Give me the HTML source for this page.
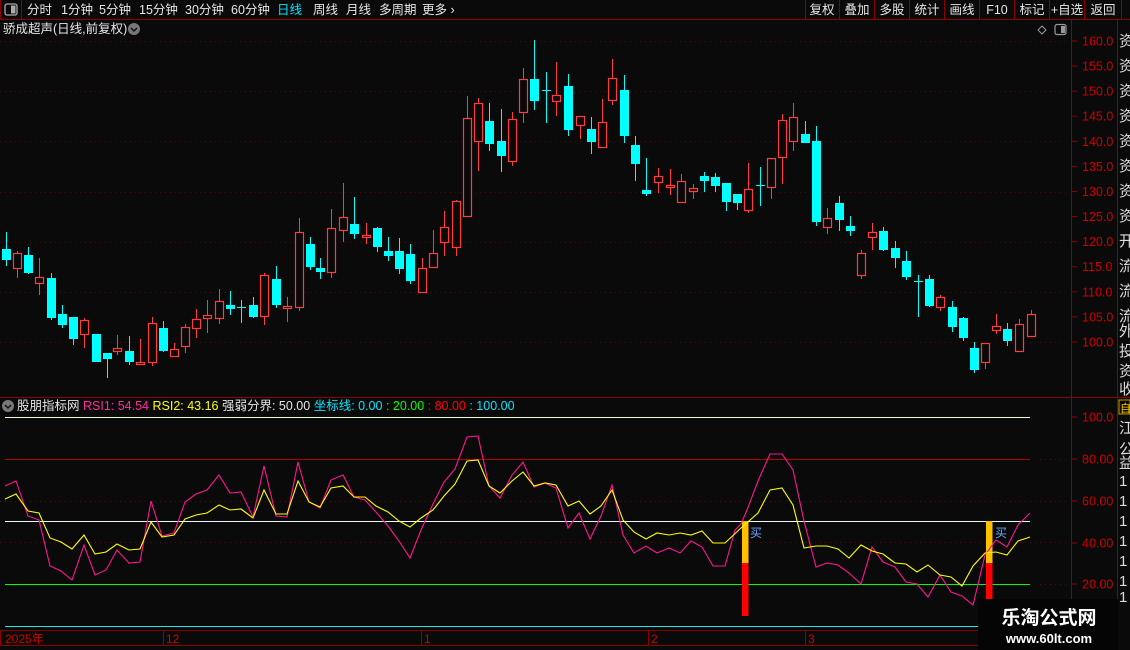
<!DOCTYPE html>
<html><head><meta charset="utf-8">
<style>
body{margin:0;width:1130px;height:650px;background:#0a0a0a;overflow:hidden;font-family:"Liberation Sans","Noto Sans CJK SC",sans-serif;}
svg{position:absolute;left:0;top:0}
text{font-family:"Liberation Sans","Noto Sans CJK SC",sans-serif}
</style></head><body>
<svg id="s" width="1130" height="650" xmlns="http://www.w3.org/2000/svg">
<rect width="1130" height="650" fill="#0a0a0a"/>
<line x1="0" y1="19.5" x2="1130" y2="19.5" stroke="#8b0000"/>
<rect x="0.5" y="-1" width="21" height="20.5" fill="none" stroke="#8b0000"/>
<rect x="5" y="4" width="12" height="11" rx="2" fill="none" stroke="#aaa" stroke-width="1.3"/>
<rect x="11" y="5.5" width="4.5" height="8" fill="#aaa"/>
<g font-size="12.5" fill="#e6e6e6">
<text x="27" y="14">分时</text><text x="61" y="14">1分钟</text><text x="99" y="14">5分钟</text>
<text x="139" y="14">15分钟</text><text x="185" y="14">30分钟</text><text x="231" y="14">60分钟</text>
<text x="277" y="14" fill="#00e5ff">日线</text><text x="313" y="14">周线</text><text x="346" y="14">月线</text>
<text x="379" y="14">多周期</text><text x="422" y="14">更多 ›</text>
</g>
<g stroke="#8b0000">
<line x1="805.5" y1="0" x2="805.5" y2="19"/><line x1="839.5" y1="0" x2="839.5" y2="19"/>
<line x1="874.5" y1="0" x2="874.5" y2="19"/><line x1="909.5" y1="0" x2="909.5" y2="19"/>
<line x1="944.5" y1="0" x2="944.5" y2="19"/><line x1="979.5" y1="0" x2="979.5" y2="19"/>
<line x1="1014.5" y1="0" x2="1014.5" y2="19"/><line x1="1049.5" y1="0" x2="1049.5" y2="19"/>
<line x1="1084.5" y1="0" x2="1084.5" y2="19"/><line x1="1121.5" y1="0" x2="1121.5" y2="19"/>
</g>
<g font-size="12.5" fill="#e6e6e6" text-anchor="middle">
<text x="822" y="14">复权</text><text x="857" y="14">叠加</text><text x="892" y="14">多股</text>
<text x="927" y="14">统计</text><text x="962" y="14">画线</text><text x="997" y="14">F10</text>
<text x="1032" y="14">标记</text><text x="1067" y="14">+自选</text><text x="1103" y="14">返回</text>
</g>
<text x="3" y="33" font-size="12.5" fill="#e6e6e6">骄成超声(日线,前复权)</text>
<circle cx="134" cy="29" r="6" fill="#777"/><path d="M131 28l3 3 3-3" stroke="#111" stroke-width="1.5" fill="none"/>
<path d="M1042 26l4 4-4 4-4-4z" fill="none" stroke="#999"/>
<rect x="1055" y="24.5" width="11" height="10" rx="2" fill="none" stroke="#999" stroke-width="1.2"/><rect x="1061" y="26" width="4" height="7" fill="#999"/>
<line x1="1071.5" y1="20" x2="1071.5" y2="646" stroke="#8b0000"/>
<line x1="1117.5" y1="20" x2="1117.5" y2="650" stroke="#8b0000"/>
<line x1="0" y1="397.5" x2="1130" y2="397.5" stroke="#8b0000"/>
<line x1="0" y1="630.5" x2="1071" y2="630.5" stroke="#8b0000"/>
<line x1="0" y1="645.5" x2="1071" y2="645.5" stroke="#8b0000"/>
<g id="grid"></g>
<g id="cand"></g>
<g font-size="12.5" fill="#cc0000" id="ax"></g>
<g font-size="15" fill="#ddd">
<text x="1119" y="46">资</text><text x="1119" y="71">资</text><text x="1119" y="96">资</text><text x="1119" y="121">资</text>
<text x="1119" y="146">资</text><text x="1119" y="171">资</text><text x="1119" y="196">资</text><text x="1119" y="221">资</text>
<text x="1119" y="246">开</text><text x="1119" y="271">流</text><text x="1119" y="296">流</text><text x="1119" y="321">流</text>
<text x="1119" y="336">外</text><text x="1119" y="356">投</text><text x="1119" y="376">资</text><text x="1119" y="394">收</text>
<text x="1119" y="433">江</text><text x="1119" y="454">公</text><text x="1119" y="468">益</text>
<text x="1119" y="486">1</text><text x="1119" y="506">1</text><text x="1119" y="526">1</text><text x="1119" y="546">1</text><text x="1119" y="566">1</text><text x="1119" y="586">1</text><text x="1119" y="602">1</text>
</g>
<rect x="1119" y="400" width="11" height="14" fill="none" stroke="#cc9900"/><text x="1120" y="412" font-size="11" fill="#ffcc00">自</text>
<circle cx="8" cy="406" r="6" fill="#777"/><path d="M5 405l3 3 3-3" stroke="#111" stroke-width="1.5" fill="none"/>
<text x="17" y="410" font-size="12.5"><tspan fill="#e6e6e6">股朋指标网 </tspan><tspan fill="#ff2a9a">RSI1: 54.54 </tspan><tspan fill="#ffff00">RSI2: 43.16 </tspan><tspan fill="#e6e6e6">强弱分界: 50.00 </tspan><tspan fill="#00e5ff">坐标线: 0.00 </tspan><tspan fill="#00ff00">: 20.00 </tspan><tspan fill="#ff0000">: 80.00 </tspan><tspan fill="#00e5ff">: 100.00</tspan></text>
<g stroke-dasharray="1 4" stroke="#6a0000"><line x1="0" y1="501.5" x2="1070" y2="501.5"/><line x1="0" y1="542.5" x2="1070" y2="542.5"/><line x1="1040" y1="459.5" x2="1070" y2="459.5"/><line x1="1040" y1="584.5" x2="1070" y2="584.5"/></g>
<line x1="5" y1="417.5" x2="1030" y2="417.5" stroke="#eaffe0"/>
<line x1="5" y1="459.5" x2="1030" y2="459.5" stroke="#b00000"/>
<line x1="5" y1="521.5" x2="1030" y2="521.5" stroke="#f0f8ff"/>
<line x1="5" y1="584.5" x2="1030" y2="584.5" stroke="#00ff00"/>
<line x1="5" y1="626.5" x2="1030" y2="626.5" stroke="#22e5e5"/>
<rect x="742" y="521" width="6.5" height="42" fill="#ffc000"/><rect x="742" y="563" width="6.5" height="53" fill="#ff0000"/>
<rect x="986" y="521" width="6.5" height="42" fill="#ffc000"/><rect x="986" y="563" width="6.5" height="50" fill="#ff0000"/>
<polyline fill="none" stroke="#ff1493" stroke-width="1.1" points="5,486 16,481 28,516 39,520 50,566 61,571 72,580 84,545 95,575 106,570 117,550 129,563 140,562 151,501 162,536 174,533 185,502 196,494 207,490 219,475 230,493 241,492 253,517 264,466 276,516 287,517 298,462 309,502 320,508 331,480 343,475 354,497 365,500 376,512 388,526 399,541 410,558 421,530 433,504 444,482 455,469 467,437 478,436 489,486 500,498 512,475 523,462 534,487 545,483 556,488 568,528 579,513 590,539 601,516 612,485 623,535 634,553 646,546 657,553 669,548 680,553 691,541 702,547 713,566 725,566 735,530 741,524 747,510 758,481 770,454 782,454 793,470 804,521 816,567 827,563 838,565 849,573 861,584 872,547 883,562 895,567 906,582 917,584 928,597 940,575 951,592 962,596 973,605 985,555 996,540 1007,547 1018,525 1030,513"/>
<polyline fill="none" stroke="#ffff00" stroke-width="1.1" points="5,499 16,494 28,511 39,513 50,538 61,542 72,549 84,535 95,554 106,552 117,544 129,550 140,549 151,522 162,537 174,535 185,519 196,515 207,513 219,505 230,510 241,509 253,518 264,490 276,514 287,514 298,481 309,502 320,507 331,488 343,486 354,497 365,497 376,506 388,512 399,521 410,527 421,518 433,510 444,496 455,484 467,461 478,460 489,486 500,493 512,481 523,472 534,486 545,483 556,485 568,506 579,501 590,514 601,506 612,490 623,520 634,532 646,539 657,533 669,535 680,533 691,535 702,531 713,543 725,543 741,528 758,513 770,490 782,488 793,505 804,548 816,546 827,546 838,549 849,558 861,545 872,551 883,554 895,563 906,564 917,572 928,565 940,575 951,577 962,586 973,566 985,553 996,552 1007,555 1018,541 1030,537"/>
<text x="750" y="537" font-size="12" fill="#6aa8ff">买</text>
<text x="995" y="537" font-size="12" fill="#6aa8ff">买</text>
<g stroke="#8b0000"><line x1="0.5" y1="630" x2="0.5" y2="646"/><line x1="163.5" y1="630" x2="163.5" y2="646"/><line x1="421.5" y1="630" x2="421.5" y2="646"/><line x1="648.5" y1="630" x2="648.5" y2="646"/><line x1="805.5" y1="630" x2="805.5" y2="646"/></g>
<g font-size="12" fill="#cc0000"><text x="5" y="643">2025年</text><text x="166" y="643">12</text><text x="424" y="643">1</text><text x="651" y="643">2</text><text x="808" y="643">3</text></g>
<rect x="978" y="599" width="140" height="51" fill="#050505"/>
<text x="1049" y="624" font-size="19" font-weight="bold" fill="#fff" text-anchor="middle">乐淘公式网</text>
<text x="1049" y="643" font-size="13" font-weight="bold" fill="#fff" text-anchor="middle" font-family="Liberation Serif,serif">www.60lt.com</text>
</svg>
<script>
var NS="http://www.w3.org/2000/svg";
function el(p,t,a){var e=document.createElementNS(NS,t);for(var k in a)e.setAttribute(k,a[k]);document.getElementById(p).appendChild(e);return e;}
for(var i=0;i<7;i++){var y=Math.round(41+i*50.17)+0.5;el("grid","line",{x1:0,y1:y,x2:1070,y2:y,stroke:"#5a0000","stroke-dasharray":"1 4"});}
for(var i=0;i<13;i++){var y=41+i*25.08;el("ax","line",{x1:1071,y1:y,x2:1077,y2:y,stroke:"#8b0000"});var t=el("ax","text",{x:1082,y:y+4.5});t.textContent=(160-i*5).toFixed(1);}
var il=[[417,"100.0"],[459,"80.00"],[501,"60.00"],[543,"40.00"],[584,"20.00"]];
il.forEach(function(a){el("ax","line",{x1:1071,y1:a[0],x2:1077,y2:a[0],stroke:"#8b0000"});var t=el("ax","text",{x:1082,y:a[0]+4.5});t.textContent=a[1];});
var C=[[5.5,249,260,232,266,0],[16.5,253,268,251,278,1],[27.5,255,273,247,274,0],[39,277,283,258,295,1],[50.5,278,318,273,320,0],[61.5,314,325,305,328,0],[72.5,317,339,317,345,0],[84,320,334,318,348,1],[95.5,334,362,334,362,0],[106.5,353,359,353,378,0],[117,348,351,335,355,1],[129,351,362,336,365,0],[140,362,364,339,364,1],[151.5,323,362,317,366,1],[162.5,328,351,321,352,0],[174,349,356,343,356,1],[185,327,346,324,353,1],[196,319,328,309,338,1],[207,315,318,300,333,1],[219,301,318,289,324,1],[230,305,309,291,315,0],[241,307,308,300,323,0],[253,305,317,297,318,0],[264,275,316,273,325,1],[276,279,305,266,308,0],[287,306,308,297,322,1],[298.5,232,307,218,311,1],[309.5,244,267,237,270,0],[320,268,272,258,279,0],[331,228,272,209,278,1],[343,217,230,183,242,1],[354,224,234,197,239,0],[365.5,235,237,223,244,1],[376.5,228,247,227,252,0],[388,251,256,237,261,0],[399,251,269,238,274,0],[410,254,281,244,284,0],[421.5,268,292,258,292,1],[433,253,267,230,267,1],[444,227,242,211,256,1],[455.5,201,247,200,256,1],[467,118,216,96,216,1],[478,103,141,98,171,1],[489,121,144,103,151,0],[500.5,141,156,109,172,0],[512,119,161,112,166,1],[523,79,112,68,123,1],[534,79,101,40,110,0],[545.5,90,91,72,123,0],[556,95,101,62,116,1],[568,86,130,74,136,0],[579.5,116,125,116,139,1],[590.5,129,142,117,154,0],[601.5,122,147,99,147,1],[612,78,100,59,105,1],[623.5,90,136,75,143,0],[634.5,145,164,136,181,0],[646,190,194,158,196,0],[657.5,176,182,168,193,1],[669.5,185,187,169,195,1],[681,181,202,174,203,1],[692.5,188,191,184,199,1],[703.5,176,181,172,192,0],[714.5,177,186,173,192,0],[726,183,202,183,211,0],[737,194,203,194,210,0],[748,189,210,163,213,1],[759.5,185,186,167,206,0],[771,158,187,158,199,1],[782,120,157,114,184,1],[793,117,141,103,151,1],[804.5,134,143,121,143,0],[816,141,222,126,226,0],[827,218,227,208,234,1],[838.5,203,220,196,231,0],[849.5,226,231,216,236,0],[861,253,275,250,279,1],[872,232,237,223,250,1],[883,231,250,227,251,0],[895,248,258,241,268,0],[906,261,277,251,280,0],[917.5,281,282,275,317,0],[928.5,279,306,275,307,0],[940,297,307,295,311,1],[951.5,307,327,301,332,0],[962.5,318,338,317,341,0],[973.5,348,370,342,373,0],[985,343,362,343,369,1],[996,326,330,314,334,1],[1007,329,341,323,346,0],[1018.5,324,351,319,351,1],[1030.5,314,336,310,337,1]];
C.forEach(function(c){var x=Math.round(c[0])+0.5,col=c[5]?"#ff3b3b":"#00ffff";
 el("cand","line",{x1:x,y1:c[3],x2:x,y2:c[4],stroke:col,"stroke-width":1});
 var h=Math.max(c[2]-c[1],1);
 if(c[5])el("cand","rect",{x:x-4,y:c[1]+0.5,width:8,height:h,fill:"#0a0a0a",stroke:col,"stroke-width":1.2});
 else el("cand","rect",{x:x-4.5,y:c[1],width:9,height:h,fill:col});
});
</script>
</body></html>
